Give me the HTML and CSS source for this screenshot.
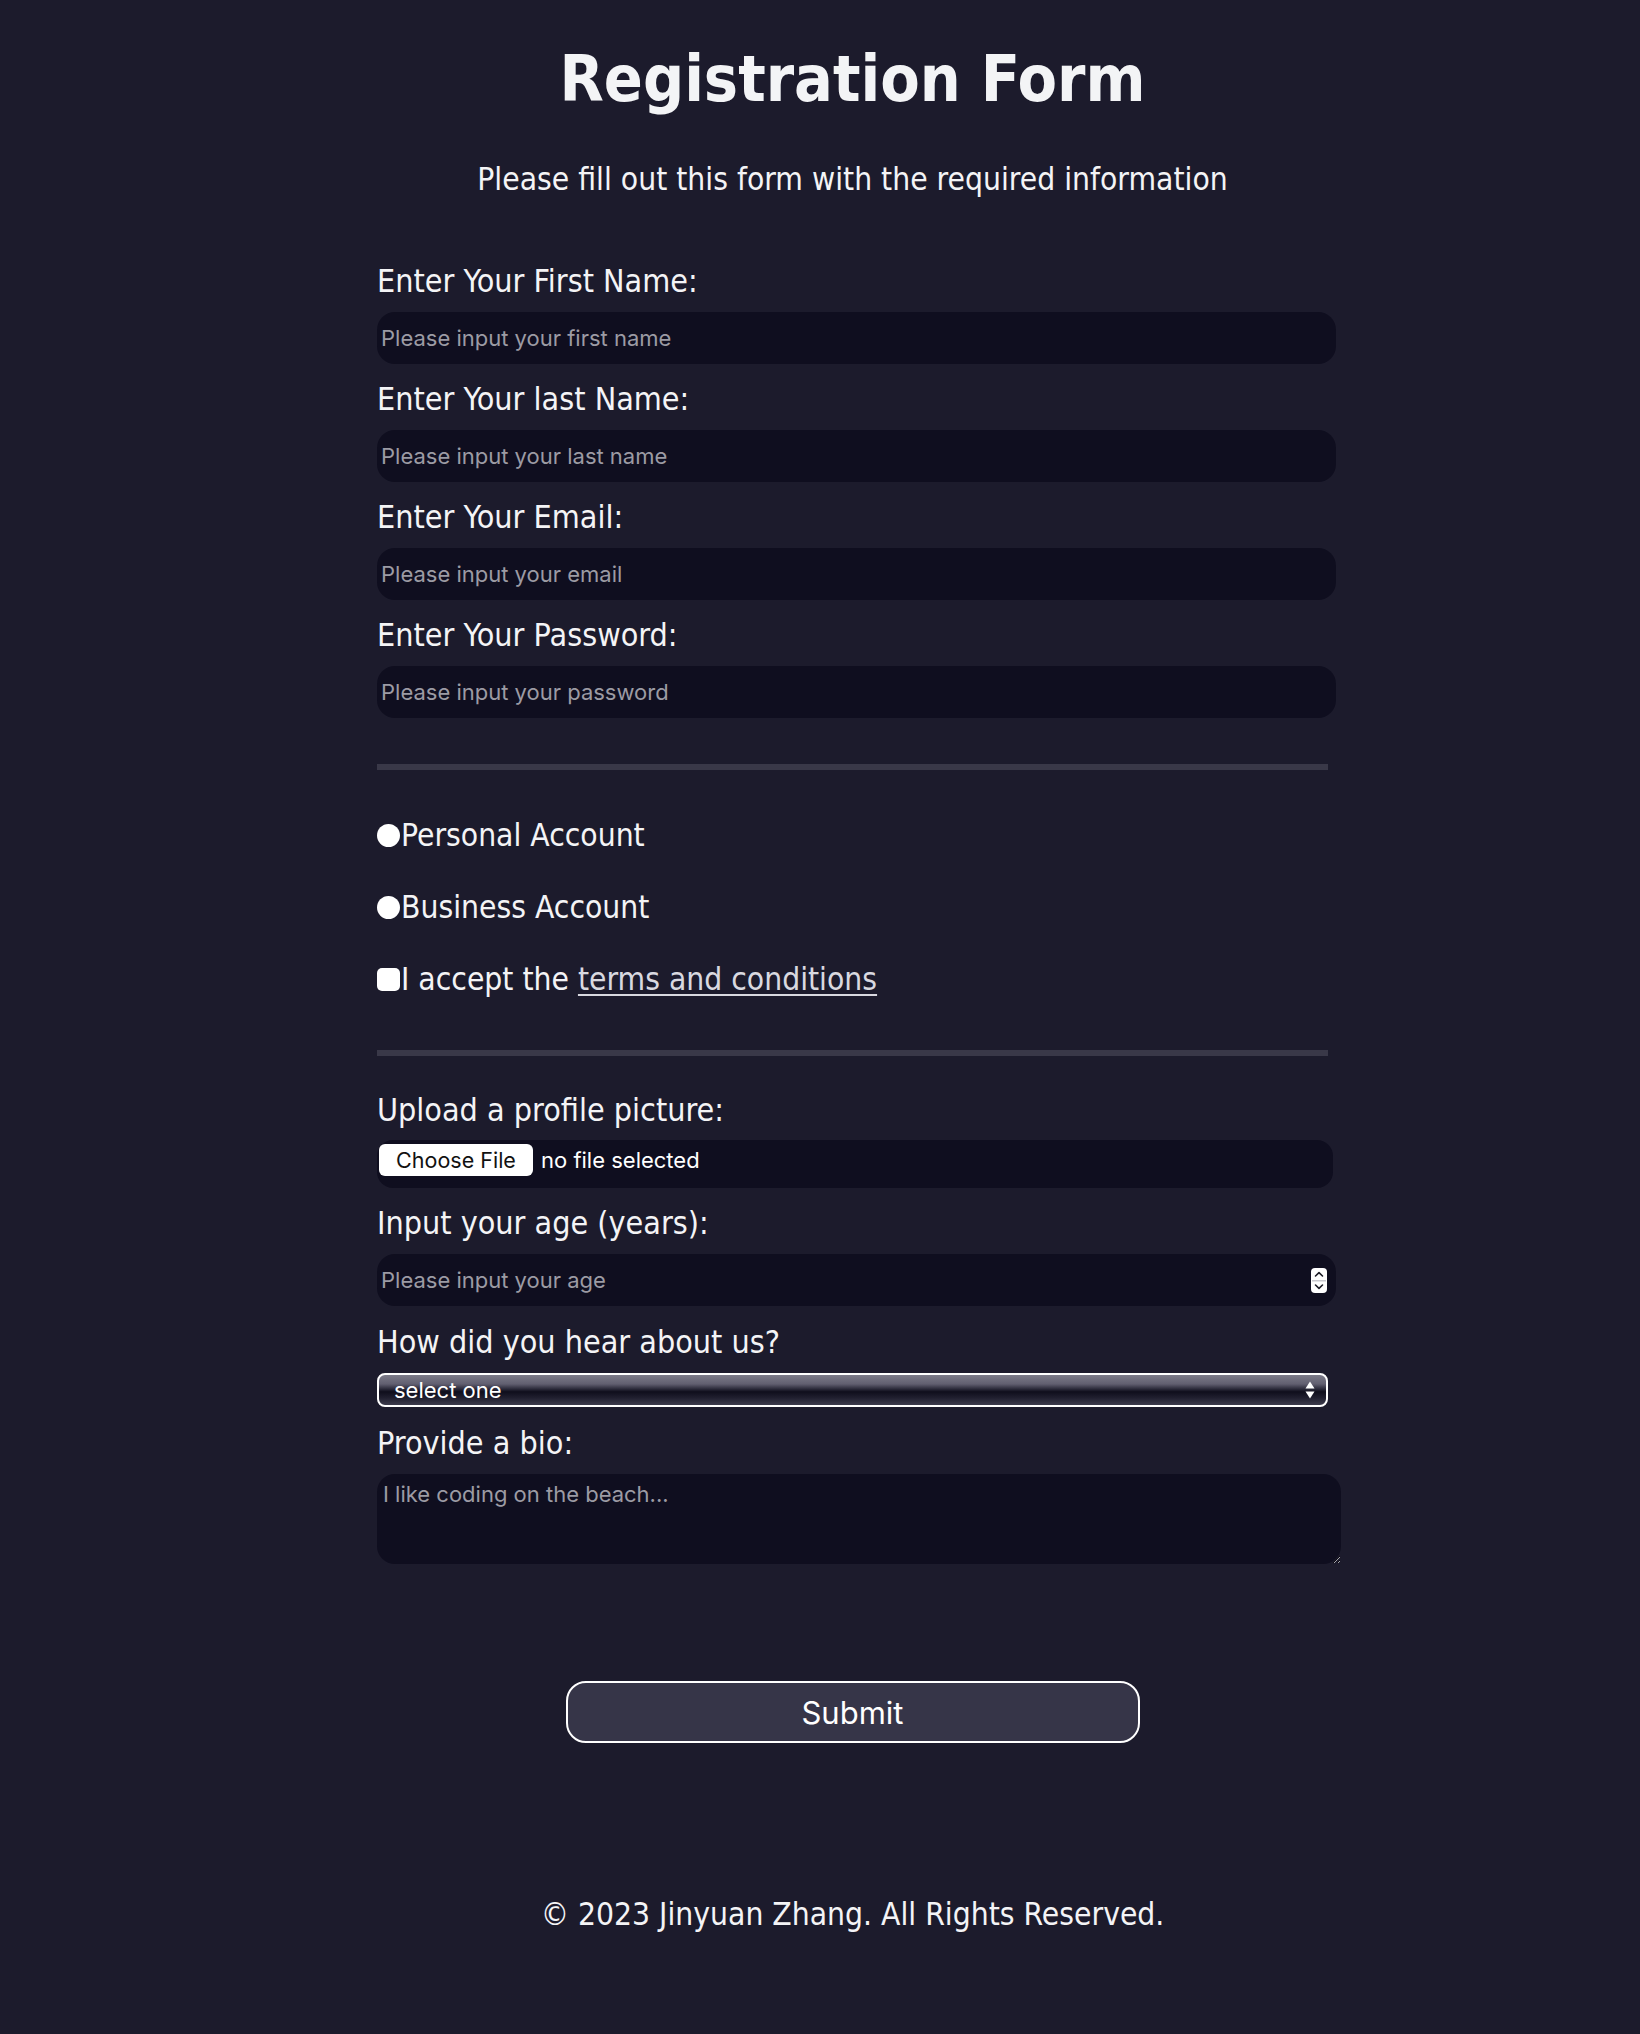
FILE: index.html
```html
<!DOCTYPE html>
<html lang="en">
<head>
<meta charset="utf-8">
<title>Registration Form</title>
<link rel="stylesheet" href="styles.css">
</head>
<body>
<main class="page">
  <h1 class="title">Registration Form</h1>
  <p class="subtitle">Please fill out this form with the required information</p>
  <form class="form">
    <div class="group">
      <div class="field">
        <label class="field-label" for="first-name">Enter Your First Name:</label>
        <input class="text-input" id="first-name" type="text" placeholder="Please input your first name">
      </div>
      <div class="field">
        <label class="field-label" for="last-name">Enter Your last Name:</label>
        <input class="text-input" id="last-name" type="text" placeholder="Please input your last name">
      </div>
      <div class="field">
        <label class="field-label" for="email">Enter Your Email:</label>
        <input class="text-input" id="email" type="email" placeholder="Please input your email">
      </div>
      <div class="field">
        <label class="field-label" for="password">Enter Your Password:</label>
        <input class="text-input" id="password" type="password" placeholder="Please input your password">
      </div>
    </div>

    <hr class="divider divider-first">

    <div class="choices">
      <label class="choice"><input class="radio" type="radio" name="account">Personal Account</label>
      <label class="choice"><input class="radio" type="radio" name="account">Business Account</label>
      <label class="choice"><input class="checkbox" type="checkbox">I accept the&nbsp;<a class="terms" href="#">terms and conditions</a></label>
    </div>

    <hr class="divider divider-second">

    <div class="group group-extra">
      <div class="field field-file">
        <span class="field-label">Upload a profile picture:</span>
        <div class="file-box">
          <button class="file-button" type="button">Choose File</button>
          <span class="file-status">no file selected</span>
        </div>
      </div>
      <div class="field">
        <label class="field-label" for="age">Input your age (years):</label>
        <div class="num-box">
          <input class="num-input" id="age" type="text" placeholder="Please input your age">
          <svg class="spinner" width="16" height="25" viewBox="0 0 16 25" aria-hidden="true">
            <rect x="0" y="0" width="16" height="25" rx="4" fill="#ffffff"/>
            <rect x="1" y="12" width="14" height="1.5" fill="#c9c9cf"/>
            <path d="M4.5 8 L8 4.6 L11.5 8" fill="none" stroke="#1b1b25" stroke-width="1.6" stroke-linecap="round" stroke-linejoin="round"/>
            <path d="M4.5 17 L8 20.4 L11.5 17" fill="none" stroke="#1b1b25" stroke-width="1.6" stroke-linecap="round" stroke-linejoin="round"/>
          </svg>
        </div>
      </div>
      <div class="field field-tight">
        <label class="field-label" for="source">How did you hear about us?</label>
        <div class="select-wrap">
          <select class="select" id="source">
            <option>select one</option>
            <option>Friends</option>
            <option>Social media</option>
            <option>Search engine</option>
          </select>
          <svg class="select-arrows" width="10" height="20" viewBox="0 0 10 20" aria-hidden="true">
            <path d="M5 1.5 L9.5 8.5 L0.5 8.5 Z" fill="#ffffff"/>
            <path d="M5 18.5 L9.5 11.5 L0.5 11.5 Z" fill="#ffffff"/>
          </svg>
        </div>
      </div>
      <div class="field field-tight">
        <label class="field-label" for="bio">Provide a bio:</label>
        <textarea class="bio" id="bio" placeholder="I like coding on the beach..."></textarea>
      </div>
    </div>

    <button class="submit" type="submit">Submit</button>
  </form>
  <footer class="footer">© 2023 Jinyuan Zhang. All Rights Reserved.</footer>
</main>
</body>
</html>
```

FILE: styles.css
```css
html, body {
  margin: 0;
  padding: 0;
  background: #1c1b2c;
}

body {
  color: #f4f4f6;
  font-family: "DejaVu Sans Condensed", "DejaVu Sans", sans-serif;
  font-stretch: condensed;
}

.page {
  width: 951px;
  margin-left: 377px;
  padding-top: 42px;
  padding-bottom: 100px;
  display: flex;
  flex-direction: column;
}

.title {
  margin: 0;
  font-size: 64px;
  line-height: 75px;
  font-weight: 700;
  text-align: center;
  color: #f3f4f6;
}

.subtitle {
  margin: 44px 0 0;
  font-size: 31.5px;
  line-height: 36px;
  text-align: center;
  color: #f4f4f6;
}

.form {
  margin-top: 66px;
  display: flex;
  flex-direction: column;
}

.group {
  display: flex;
  flex-direction: column;
  gap: 17px;
}

.field {
  display: flex;
  flex-direction: column;
  gap: 13px;
}

.field-file {
  gap: 12px;
}

.field-tight {
  margin-top: 1px;
}

.field-label {
  font-size: 32px;
  line-height: 36px;
  color: #f4f4f6;
}

.text-input,
.num-input,
.select,
.bio,
.file-button,
.file-status,
.submit {
  font-family: Inter, "Liberation Sans", sans-serif;
}

.text-input {
  box-sizing: border-box;
  width: 959px;
  height: 52px;
  margin: 0;
  padding: 0 4px;
  border: none;
  border-radius: 18px;
  background: #0f0e1f;
  color: #ffffff;
  font-size: 22px;
  outline: none;
}

.text-input::placeholder,
.num-input::placeholder,
.bio::placeholder {
  color: #9c9ba4;
  opacity: 1;
}

.divider {
  width: 951px;
  height: 6px;
  margin: 0;
  border: none;
  background: #393848;
}

.divider-first {
  margin-top: 46px;
}

.divider-second {
  margin-top: 53px;
}

.choices {
  margin-top: 47px;
  display: flex;
  flex-direction: column;
  gap: 36px;
}

.choice {
  display: flex;
  align-items: center;
  height: 36px;
  font-size: 31.5px;
  line-height: 36px;
  color: #f4f4f6;
  white-space: nowrap;
}

.radio,
.checkbox {
  appearance: none;
  -webkit-appearance: none;
  flex: none;
  width: 23px;
  height: 23px;
  margin: 0 1px 0 0;
  border: none;
  background: #ffffff;
}

.radio {
  border-radius: 50%;
}

.checkbox {
  border-radius: 5px;
}

.terms {
  color: #d9d9e0;
  text-decoration: underline;
  text-decoration-thickness: 2px;
  text-underline-offset: 4px;
}

.group-extra {
  margin-top: 36px;
}

.file-box {
  box-sizing: border-box;
  width: 956px;
  height: 48px;
  padding: 4px 2px 0;
  display: flex;
  align-items: flex-start;
  gap: 8px;
  border-radius: 16px;
  background: #0f0e1f;
}

.file-button {
  width: 154px;
  height: 32px;
  padding: 0;
  border: none;
  border-radius: 6px;
  background: #ffffff;
  color: #111111;
  font-size: 21.5px;
  line-height: 32px;
}

.file-status {
  color: #ffffff;
  font-size: 22px;
  line-height: 32px;
}

.num-box {
  box-sizing: border-box;
  width: 959px;
  height: 52px;
  padding: 0 9px 0 4px;
  display: flex;
  align-items: center;
  border-radius: 18px;
  background: #0f0e1f;
}

.num-input {
  flex: 1;
  height: 100%;
  margin: 0;
  padding: 0;
  border: none;
  background: transparent;
  color: #ffffff;
  font-size: 22px;
  outline: none;
}

.spinner {
  flex: none;
  display: block;
}

.select-wrap {
  position: relative;
  width: 951px;
  height: 34px;
}

.select {
  appearance: none;
  -webkit-appearance: none;
  box-sizing: border-box;
  width: 100%;
  height: 34px;
  margin: 0;
  padding: 0 40px 0 15px;
  border: 2px solid #ffffff;
  border-radius: 8px;
  background: linear-gradient(to bottom, #7c7b89 0%, #615f70 30%, #2d2c3c 46%, #0f0e1c 56%, #1f1e2e 75%, #3c3b4c 100%);
  color: #ffffff;
  font-size: 22px;
  line-height: 30px;
  outline: none;
}

.select-arrows {
  position: absolute;
  right: 13px;
  top: 7px;
  pointer-events: none;
}

.bio {
  box-sizing: border-box;
  width: 964px;
  height: 90px;
  margin: 0;
  padding: 7px 6px;
  border: none;
  border-radius: 18px;
  background: #0f0e1f;
  color: #ffffff;
  font-size: 22px;
  outline: none;
}

.submit {
  align-self: center;
  width: 574px;
  height: 62px;
  margin-top: 117px;
  padding: 0;
  border: 2px solid #ffffff;
  border-radius: 20px;
  background: #363548;
  color: #ffffff;
  font-size: 31px;
}

.footer {
  margin-top: 153px;
  font-size: 31.5px;
  line-height: 36px;
  text-align: center;
  color: #f4f4f6;
}
```
